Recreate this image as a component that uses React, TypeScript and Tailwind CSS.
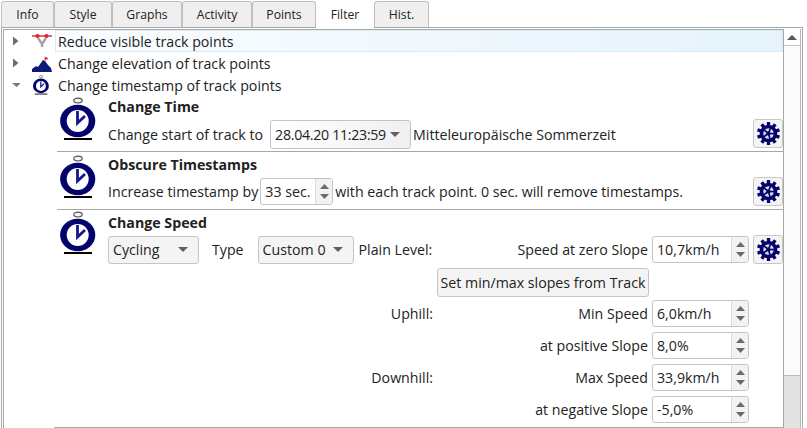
const tabs = ["Info", "Style", "Graphs", "Activity", "Points", "Filter", "Hist."];
const tabWidths = [53, 58, 70, 70, 64, 58, 55];

function Tabs() {
  return (
    <div className="flex h-[27px] items-end pl-[1px] text-[12.2px]">
      {tabs.map((tab, i) => {
        const active = tab === "Filter";
        return (
          <div
            key={tab}
            style={{ width: tabWidths[i] }}
            className={
              active
                ? "relative z-10 -mb-[2px] flex h-[29px] items-center justify-center bg-white"
                : "flex h-[26px] items-center justify-center rounded-t-[3px] border border-b-0 border-[#c0c0c0] bg-[#efefef]"
            }
          >
            {tab}
          </div>
        );
      })}
    </div>
  );
}

function Arrow({ open }: { open?: boolean }) {
  return (
    <svg width="10" height="10" viewBox="0 0 10 10" className="shrink-0">
      {open ? <path d="M2 3h9L6.5 7z" fill="#7a7a7a" /> : <path d="M3 0.5v9L8.5 5z" fill="#6f6f6f" />}
    </svg>
  );
}

function ReduceIcon() {
  return (
    <svg width="22" height="16" viewBox="0 0 22 16" className="block">
      <path d="M7 5l4 6 4-6M11 11v3" stroke="#a5a5a5" strokeWidth="2.4" fill="none" />
      <path d="M1 3h20" stroke="#e0202c" strokeWidth="1.4" />
      <circle cx="6.5" cy="3" r="2" fill="#e0202c" />
      <circle cx="15.5" cy="3" r="2" fill="#e0202c" />
    </svg>
  );
}

function ElevationIcon() {
  return (
    <svg width="22" height="18" viewBox="0 0 22 18" className="block">
      <path d="M1 18v-3l4-3 2 1 5-7 2 1 3 4 3 3 1 4z" fill="#0b1a7a" />
      <path d="M14 7V3l3 1.5-3 1.5" fill="#e0202c" stroke="#e0202c" strokeWidth="0.6" />
    </svg>
  );
}

function Clock({ small }: { small?: boolean }) {
  return (
    <svg
      width={small ? 19 : 42}
      height={small ? 20 : 44}
      viewBox="0 0 42 44"
      className="block shrink-0"
    >
      <ellipse cx="20" cy="3.5" rx="4.2" ry="2.4" fill="#f4f4f4" stroke="#555" strokeWidth="1.2" />
      <ellipse cx="19.7" cy="24" rx="17.6" ry="16.2" fill="#03036b" />
      <ellipse cx="19.7" cy="24" rx="11" ry="11" fill="#fff" />
      <path d="M19.5 14v12l7.5-7" fill="none" stroke="#16168f" strokeWidth="2.8" />
      <path d="M6 42h28" stroke="#000" strokeWidth="2" />
    </svg>
  );
}

function Gear() {
  const teeth = [0, 36, 72, 108, 144];
  const spokes = [20, 92, 164, 236, 308];
  return (
    <button className="flex h-[29px] w-[30px] shrink-0 items-center justify-center rounded-[3px] border border-[#c8c8c8] bg-[#f4f4f4]">
      <svg width="23" height="23" viewBox="0 0 22 22">
        {teeth.map((a) => (
          <rect key={a} x="9.4" y="0" width="3.2" height="22" fill="#04046b" transform={`rotate(${a} 11 11)`} />
        ))}
        <circle cx="11" cy="11" r="8.4" fill="#04046b" />
        <circle cx="11" cy="11" r="5" fill="#dcdce8" />
        {spokes.map((a) => (
          <rect key={a} x="10.2" y="5.5" width="1.6" height="5.5" fill="#04046b" transform={`rotate(${a} 11 11)`} />
        ))}
        <circle cx="11" cy="11" r="2" fill="#04046b" />
      </svg>
    </button>
  );
}

function Combo({ text, className }: { text: string; className: string }) {
  return (
    <div className={`flex items-center justify-between rounded-[3px] border border-[#c4c4c4] pl-[4px] pr-[10px] ${className}`}>
      <span className="whitespace-nowrap">{text}</span>
      <svg width="10" height="5" viewBox="0 0 10 5" className="shrink-0">
        <path d="M0 0h10L5 5z" fill="#606060" />
      </svg>
    </div>
  );
}

function Spin({ text, width = "w-[97px]" }: { text: string; width?: string }) {
  return (
    <div className={`flex h-[27px] shrink-0 items-stretch rounded-[3px] border border-[#c4c4c4] bg-white ${width}`}>
      <span className="flex-1 self-center whitespace-nowrap pl-1">{text}</span>
      <div className="flex w-[17px] flex-col items-center justify-center gap-[5px] rounded-r-[3px] border-l border-[#dcdcdc] bg-[#f2f2f2]">
        <svg width="9" height="5" viewBox="0 0 9 5" className="block">
          <path d="M0 5L4.5 0 9 5z" fill="#6a6a6a" />
        </svg>
        <svg width="9" height="5" viewBox="0 0 9 5" className="block">
          <path d="M0 0h9L4.5 5z" fill="#6a6a6a" />
        </svg>
      </div>
    </div>
  );
}

function FormRow({ left, label, value }: { left?: string; label: string; value: string }) {
  return (
    <div className="flex h-[27px] items-center">
      <span className="w-[325px] text-right">{left}</span>
      <span className="flex-1 pr-[4px] text-right">{label}</span>
      <Spin text={value} />
    </div>
  );
}

function Scrollbar() {
  return (
    <div className="flex w-[17px] shrink-0 flex-col border-r border-[#b8b8b8]">
      <div className="flex h-[17px] items-center justify-center border-b border-[#c4c4c4]">
        <svg width="10" height="5" viewBox="0 0 10 5">
          <path d="M0 5L5 0l5 5z" fill="#555" />
        </svg>
      </div>
      <div className="h-[330px] border-b border-[#bdbdbd] bg-[#fbfbfb]" />
      <div className="flex-1 bg-[#e2e2e2]" />
    </div>
  );
}

export default function App() {
  return (
    <div
      className="flex h-[428px] w-[807px] flex-col overflow-hidden bg-white text-[14.2px] leading-[19px] text-[#222]"
      style={{ fontFamily: '"Open Sans", sans-serif' }}
    >
      <Tabs />
      <div className="ml-[1px] flex h-[401px] w-[802px] border border-b-0 border-[#a8a8a8] p-[1px] pb-0">
        <div className="flex w-[781px] shrink-0 flex-col border border-b-0 border-[#a8a8a8] bg-white pl-[6px]">
          <div className="flex h-[22px] items-center">
            <Arrow />
            <span className="ml-[11px] w-[22px]"><ReduceIcon /></span>
            <div className="ml-[2px] flex h-[22px] flex-1 items-center border border-[#d8ebf7] bg-linear-to-r from-[#fbfdff] to-[#e6f3fb] pl-[2px]">
              Reduce visible track points
            </div>
          </div>
          <div className="flex h-[22px] items-center">
            <Arrow />
            <span className="ml-[11px] w-[22px]"><ElevationIcon /></span>
            <span className="ml-[5px]">Change elevation of track points</span>
          </div>
          <div className="flex h-[22px] items-center">
            <Arrow open />
            <span className="ml-[12px] w-[21px]"><Clock small /></span>
            <span className="ml-[5px]">Change timestamp of track points</span>
          </div>

          <div className="ml-[47px] flex flex-1 flex-col">
            <div className="flex h-[56px] border-b border-[#a8a8a8]">
              <div className="ml-[1px] mt-[1px]"><Clock /></div>
              <div className="ml-[8px] flex flex-1 flex-col pt-[1px]">
                <b className="h-[19px]">Change Time</b>
                <div className="mt-[4px] flex h-[29px] items-center">
                  <span>Change start of track to</span>
                  <Combo text="28.04.20 11:23:59" className="ml-[7px] mr-[2px] h-[29px] w-[141px] bg-linear-to-r from-white to-[#f0f0f0] tracking-[-0.3px]" />
                  <span>Mitteleuropäische Sommerzeit</span>
                  <div className="ml-auto -mt-[2px]"><Gear /></div>
                </div>
              </div>
            </div>
            <div className="flex h-[58px] border-b border-[#a8a8a8]">
              <div className="ml-[1px] mt-[3px]"><Clock /></div>
              <div className="ml-[8px] flex flex-1 flex-col pt-[3px]">
                <b className="h-[19px]">Obscure Timestamps</b>
                <div className="mt-[3px] flex h-[29px] items-center">
                  <span>Increase timestamp by</span>
                  <div className="ml-[2px] mr-[2px]"><Spin text="33 sec." width="w-[73px]" /></div>
                  <span>with each track point. 0 sec. will remove timestamps.</span>
                  <div className="ml-auto"><Gear /></div>
                </div>
              </div>
            </div>
            <div className="flex flex-1 flex-col">
              <div className="flex flex-1">
                <div className="ml-[1px] mt-[1px]"><Clock /></div>
                <div className="ml-[8px] flex flex-1 flex-col pt-[3px]">
                  <b className="h-[19px]">Change Speed</b>
                  <div className="mt-[3px] flex h-[29px] items-center">
                    <Combo text="Cycling" className="h-[28px] w-[91px] bg-[#f4f4f4]" />
                    <span className="ml-[13px]">Type</span>
                    <Combo text="Custom 0" className="ml-[14px] h-[28px] w-[96px] bg-[#f4f4f4]" />
                    <span className="ml-[5px]">Plain Level:</span>
                    <span className="ml-auto mr-[4px]">Speed at zero Slope</span>
                    <Spin text="10,7km/h" />
                    <div className="ml-[4px]"><Gear /></div>
                  </div>
                  <div className="ml-[329px] mt-[4px] flex h-[29px] w-[212px] items-center justify-center rounded-[3px] border border-[#c4c4c4] bg-[#f4f4f4]">
                    Set min/max slopes from Track
                  </div>
                  <div className="mt-[3px] flex w-[641px] flex-col gap-[5px]">
                    <FormRow left="Uphill:" label="Min Speed" value="6,0km/h" />
                    <FormRow label="at positive Slope" value="8,0%" />
                    <FormRow left="Downhill:" label="Max Speed" value="33,9km/h" />
                    <FormRow label="at negative Slope" value="-5,0%" />
                  </div>
                </div>
              </div>
              <div className="-ml-[3px] h-px bg-[#a8a8a8]" />
            </div>
          </div>
        </div>
        <Scrollbar />
      </div>
    </div>
  );
}
